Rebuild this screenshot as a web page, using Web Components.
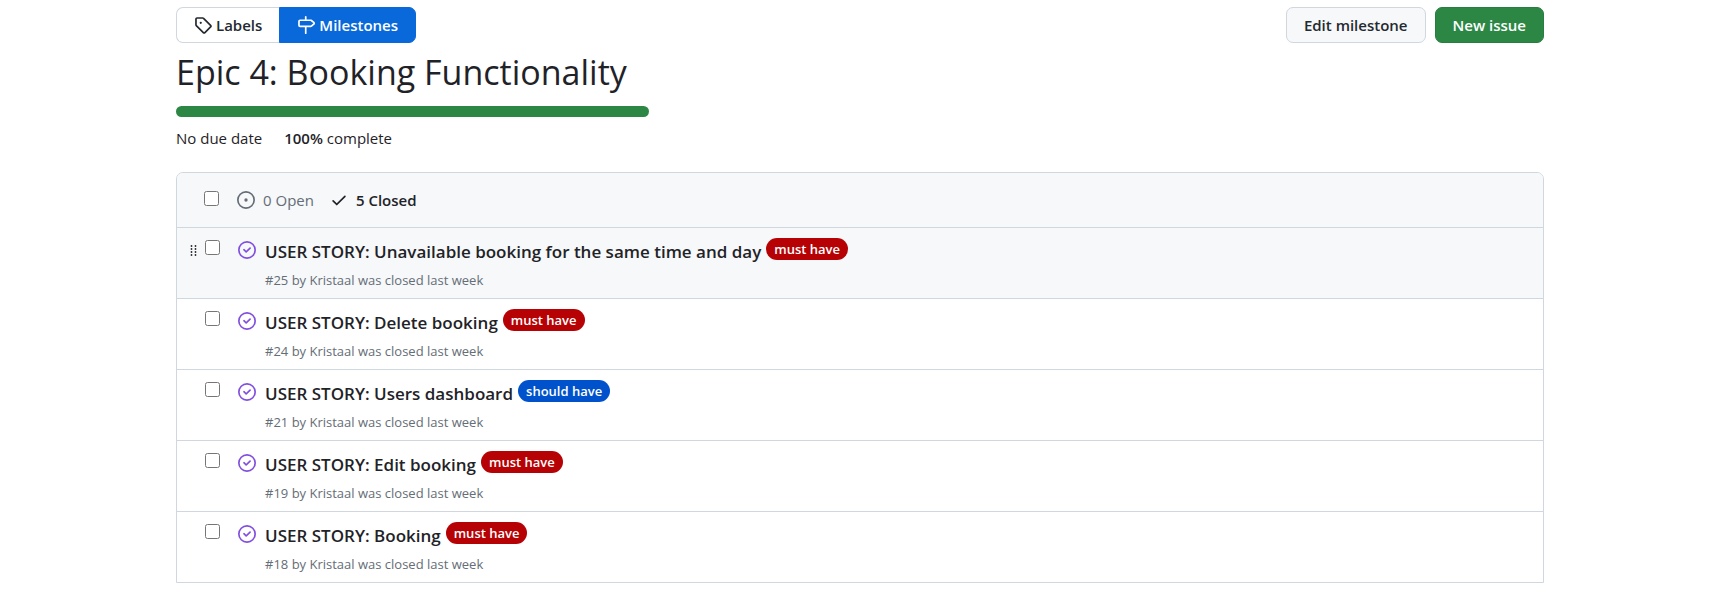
<!DOCTYPE html>
<html lang="en">
<head>
<meta charset="utf-8">
<title>Epic 4: Booking Functionality</title>
<style>
  body {
    margin: 0;
    padding: 7px 0 24px 9px;
    background: #fff;
    color: #1f2328;
    font: 15px/22px "Open Sans", "Noto Sans", sans-serif;
  }
</style>
</head>
<body>
<milestone-page>
  <page-toolbar slot="toolbar"></page-toolbar>
  <milestone-summary slot="summary" percent="100">Epic 4: Booking Functionality</milestone-summary>
  <issue-list open="0" closed="5">
    <issue-row number="25" author="Kristaal" tag="must have" tone="red" focused>USER STORY: Unavailable booking for the same time and day</issue-row>
    <issue-row number="24" author="Kristaal" tag="must have" tone="red">USER STORY: Delete booking</issue-row>
    <issue-row number="21" author="Kristaal" tag="should have" tone="blue">USER STORY: Users dashboard</issue-row>
    <issue-row number="19" author="Kristaal" tag="must have" tone="red">USER STORY: Edit booking</issue-row>
    <issue-row number="18" author="Kristaal" tag="must have" tone="red">USER STORY: Booking</issue-row>
  </issue-list>
</milestone-page>

<script>
const ICONS = {
  tag: 'M1 7.775V2.75C1 1.784 1.784 1 2.75 1h5.025c.464 0 .91.184 1.238.513l6.25 6.25a1.75 1.75 0 0 1 0 2.474l-5.026 5.026a1.75 1.75 0 0 1-2.474 0l-6.25-6.25A1.752 1.752 0 0 1 1 7.775Zm1.5 0c0 .066.026.13.073.177l6.25 6.25a.25.25 0 0 0 .354 0l5.025-5.025a.25.25 0 0 0 0-.354l-6.25-6.25a.25.25 0 0 0-.177-.073H2.75a.25.25 0 0 0-.25.25ZM6 5a1 1 0 1 1 0 2 1 1 0 0 1 0-2Z',
  milestone: 'M7.75 0a.75.75 0 0 1 .75.75V3h3.634c.414 0 .814.147 1.13.414l2.07 1.75a1.75 1.75 0 0 1 0 2.672l-2.07 1.75a1.75 1.75 0 0 1-1.13.414H8.5v5.25a.75.75 0 0 1-1.5 0V10H2.75A1.75 1.75 0 0 1 1 8.25v-3.5C1 3.784 1.784 3 2.75 3H7V.75A.75.75 0 0 1 7.75 0Zm4.384 8.5a.25.25 0 0 0 .161-.06l2.07-1.75a.248.248 0 0 0 0-.38l-2.07-1.75a.25.25 0 0 0-.161-.06H2.75a.25.25 0 0 0-.25.25v3.5c0 .138.112.25.25.25h9.384Z',
  opened: 'M8 9.5a1.5 1.5 0 1 0 0-3 1.5 1.5 0 0 0 0 3ZM8 0a8 8 0 1 1 0 16A8 8 0 0 1 8 0ZM1.5 8a6.5 6.5 0 1 0 13 0 6.5 6.5 0 0 0-13 0Z',
  check: 'M13.78 4.22a.75.75 0 0 1 0 1.06l-7.25 7.25a.75.75 0 0 1-1.06 0L2.22 9.28a.751.751 0 0 1 .018-1.042.751.751 0 0 1 1.042-.018L6 10.94l6.72-6.72a.75.75 0 0 1 1.06 0Z',
  closed: 'M11.28 6.78a.75.75 0 0 0-1.06-1.06L7.25 8.69 5.78 7.22a.75.75 0 0 0-1.06 1.06l2 2a.75.75 0 0 0 1.06 0l3.5-3.5ZM16 8A8 8 0 1 1 0 8a8 8 0 0 1 16 0Zm-1.5 0a6.5 6.5 0 1 0-13 0 6.5 6.5 0 0 0 13 0Z'
};

class BaseElement extends HTMLElement {
  connectedCallback() {
    if (!this.shadowRoot) this.attachShadow({ mode: 'open' }).innerHTML = this.render();
  }
}

customElements.define('oct-icon', class extends BaseElement {
  render() {
    return `<style>
      :host { display: block; width: 18px; height: 18px; flex: none; }
      svg { display: block; width: 100%; height: 100%; fill: currentColor; }
    </style><svg viewBox="0 0 16 16" aria-hidden="true"><path d="${ICONS[this.getAttribute('name')]}"/></svg>`;
  }
});

customElements.define('milestone-page', class extends BaseElement {
  render() {
    return `<style>
      :host { display: block; max-width: 1368px; margin: 0 auto; }
      header { display: flex; flex-direction: column; gap: 5px; margin-bottom: 23px; }
    </style>
    <header><slot name="toolbar"></slot><slot name="summary"></slot></header>
    <main><slot></slot></main>`;
  }
});

customElements.define('page-toolbar', class extends BaseElement {
  render() {
    return `<style>
      :host { display: flex; justify-content: space-between; }
      nav, .actions { display: flex; }
      .actions { gap: 9px; }
      a, button {
        box-sizing: border-box; height: 36px; padding: 0 17px;
        display: flex; align-items: center; gap: 4px;
        border: 1px solid #d0d7de; border-radius: 7px;
        background: #fff; color: #24292f;
        font: inherit; font-weight: 600; text-decoration: none; white-space: nowrap;
      }
      .labels { border-right: 0; border-radius: 7px 0 0 7px; }
      .current { background: #0969da; border-color: #0969da; color: #fff; border-radius: 0 7px 7px 0; }
      .edit { background: #f6f8fa; }
      .new { background: #2c8745; border-color: #287d40; color: #fff; }
    </style>
    <nav aria-label="Issue sections">
      <a class="labels" href="#labels"><oct-icon name="tag"></oct-icon>Labels</a>
      <a class="current" href="#milestones" aria-current="page"><oct-icon name="milestone"></oct-icon>Milestones</a>
    </nav>
    <div class="actions">
      <button class="edit" type="button">Edit milestone</button>
      <button class="new" type="button">New issue</button>
    </div>`;
  }
});

customElements.define('milestone-summary', class extends BaseElement {
  render() {
    const percent = this.getAttribute('percent');
    return `<style>
      :host { display: block; }
      h1 { margin: 0; font-size: 34px; line-height: 48px; font-weight: 400; }
      .track { max-width: 473px; height: 11px; margin: 10px 0; border-radius: 6px; overflow: hidden; background: #eaeef2; }
      .fill { width: ${percent}%; height: 100%; background: #2c8745; }
      .meta { display: flex; gap: 22px; }
      b { font-weight: 600; }
    </style>
    <h1><slot></slot></h1>
    <div class="track" role="progressbar" aria-label="Progress" aria-valuenow="${percent}"><div class="fill"></div></div>
    <div class="meta"><span>No due date</span><span><b>${percent}%</b> complete</span></div>`;
  }
});

customElements.define('issue-list', class extends BaseElement {
  render() {
    return `<style>
      :host { display: block; border: 1px solid #d0d7de; border-radius: 7px 7px 0 0; overflow: hidden; }
      .head { display: flex; align-items: center; padding: 16px 16px 16px 27px; background: #f6f8fa; }
      input { width: 15px; height: 15px; margin: 0 18px 4px 0; }
      a { display: flex; align-items: center; gap: 8px; color: #656d76; text-decoration: none; }
      a + a { margin-left: 16px; color: #1f2328; font-weight: 600; }
    </style>
    <div class="head">
      <input type="checkbox" aria-label="Select all issues">
      <a href="#open"><oct-icon name="opened"></oct-icon>${this.getAttribute('open')} Open</a>
      <a href="#closed"><oct-icon name="check"></oct-icon>${this.getAttribute('closed')} Closed</a>
    </div>
    <div role="list"><slot></slot></div>`;
  }
});

customElements.define('issue-tag', class extends BaseElement {
  render() {
    return `<style>
      :host {
        display: block; padding: 1px 8px 0; border-radius: 11px; background: #b60205; color: #fff;
        font-size: 13px; line-height: 21px; font-weight: 600; white-space: nowrap;
      }
      :host([tone="blue"]) { background: #0052cc; }
    </style><slot></slot>`;
  }
});

customElements.define('issue-row', class extends BaseElement {
  connectedCallback() {
    this.setAttribute('role', 'listitem');
    super.connectedCallback();
  }
  render() {
    const number = this.getAttribute('number');
    const grip = this.hasAttribute('focused')
      ? `<svg class="grip" viewBox="0 0 7 11" aria-hidden="true">${[1, 4, 7, 10].map(y => `<circle cx="1.5" cy="${y}" r=".9"/><circle cx="5.5" cy="${y}" r=".9"/>`).join('')}</svg>` : '';
    return `<style>
      :host {
        display: grid; grid-template-columns: 28px 15px 18px 1fr; align-items: start;
        padding: 10px 16px 8px 0; border-top: 1px solid #d0d7de;
      }
      :host([focused]) { background: #f6f8fa; }
      .grip { grid-column: 1; width: 7px; height: 11px; margin: 7px 0 0 13px; fill: #24292f; }
      input { grid-column: 2; width: 15px; height: 15px; margin: 2px 0; }
      oct-icon { margin: 3px 0 0 18px; color: #8250df; }
      .body { margin-left: 27px; }
      .line { display: flex; align-items: flex-start; gap: 5px; }
      a { color: #1f2328; font-size: 17px; line-height: 24px; font-weight: 600; text-decoration: none; margin-top: 2px; }
      p { margin: 6px 0 0; color: #656d76; font-size: 13px; line-height: 20px; }
    </style>
    ${grip}
    <input type="checkbox" aria-label="Select issue ${number}">
    <oct-icon name="closed"></oct-icon>
    <div class="body">
      <div class="line">
        <a href="#${number}"><slot></slot></a>
        <issue-tag tone="${this.getAttribute('tone')}">${this.getAttribute('tag')}</issue-tag>
      </div>
      <p>#${number} by ${this.getAttribute('author')} was closed last week</p>
    </div>`;
  }
});
</script>
</body>
</html>
